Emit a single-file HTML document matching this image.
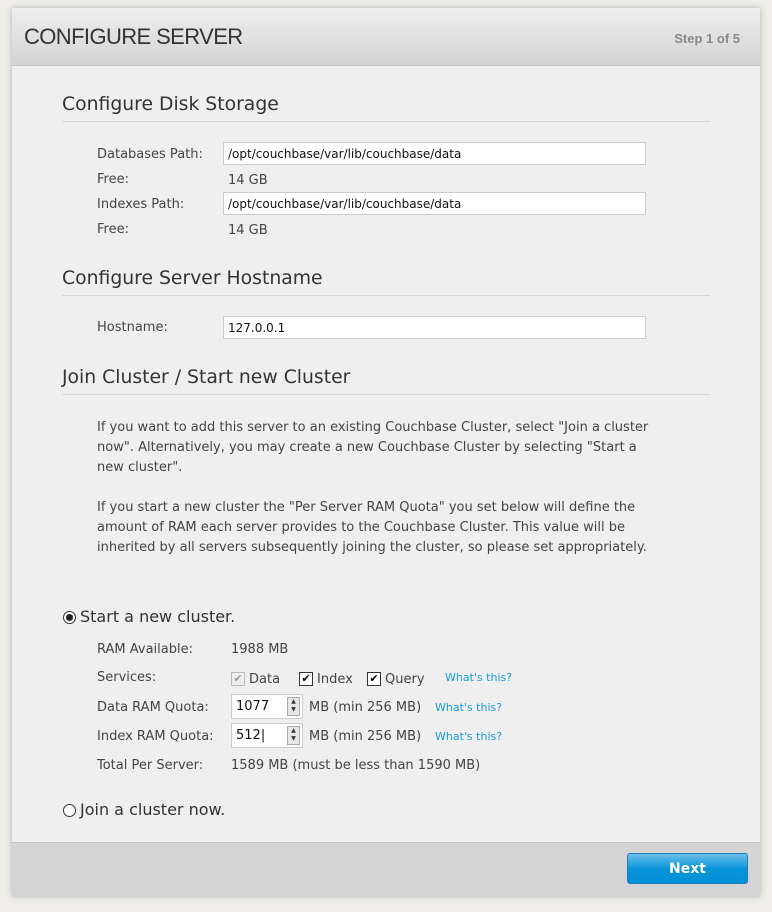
<!DOCTYPE html>
<html><head><style>
body{margin:0;width:772px;height:912px;background:#efeee8;font-family:"DejaVu Sans",Verdana,sans-serif;color:#333;position:relative;overflow:hidden}
.panel{position:absolute;left:12px;top:8px;width:748px;height:888px;background:#efefef;box-shadow:0 0 6px rgba(0,0,0,.25)}
.hdr{position:absolute;left:0;top:0;width:748px;height:57px;background:linear-gradient(#efefef,#d3d3d3);border-bottom:1px solid #c4c4c4}
.a{position:absolute;white-space:nowrap}
.t{font-size:13px;color:#444}
.h{font-size:18.8px;color:#333}
.line{position:absolute;left:50px;width:648px;height:1px;background:#d8d8d8}
.inp{position:absolute;left:211px;width:423px;height:23px;background:#fff;border:1px solid #ccc;font-size:12px;line-height:22px;padding-left:4px;box-sizing:border-box;color:#111}
.foot{position:absolute;left:0;top:834px;width:748px;height:54px;background:#d4d4d4;border-top:1px solid #c4c4c4}
.btn{position:absolute;left:615px;top:10px;width:121px;height:31px;border:1px solid #1e7bc0;border-radius:3px;background:linear-gradient(#6ec0ec,#0a93d8 50%,#0190d6);color:#fff;font-weight:bold;font-size:14px;text-align:center;line-height:30px;box-sizing:border-box}
.cb{position:absolute;width:12px;height:12px;border:1px solid #333;background:#fff;font-size:11px;line-height:12px;text-align:center;color:#000}
.num{position:absolute;left:219px;width:72px;height:25px;background:#fff;border:1px solid #ccc;box-sizing:border-box;font-size:13px;line-height:23px;padding-left:4px;color:#111}
.spin{position:absolute;right:2px;top:2px;width:13px;height:19px;background:#e6e6e6;border:1px solid #aaa;box-sizing:border-box;font-size:6px;line-height:8px;text-align:center;color:#333}
.lnk{font-size:11px;color:#1a9ad6}
.radio{position:absolute;width:11px;height:11px;border:1px solid #333;border-radius:50%;background:#fff}
</style></head><body>
<div class="panel">
<div class="hdr">
<div class="a" style="left:12px;top:16px;font-family:'Liberation Sans',sans-serif;font-size:22px;color:#333;letter-spacing:-0.6px">CONFIGURE SERVER</div>
<div class="a" style="right:20px;top:23px;font-family:'Liberation Sans',sans-serif;font-weight:bold;font-size:13px;color:#888">Step 1 of 5</div>
</div>
<div class="a h" style="left:50px;top:86px">Configure Disk Storage</div>
<div class="line" style="top:113px"></div>
<div class="a t" style="left:85px;top:139px">Databases Path:</div>
<div class="inp" style="top:134px">/opt/couchbase/var/lib/couchbase/data</div>
<div class="a t" style="left:85px;top:164px">Free:</div>
<div class="a t" style="left:216px;top:165px">14 GB</div>
<div class="a t" style="left:85px;top:189px">Indexes Path:</div>
<div class="inp" style="top:184px">/opt/couchbase/var/lib/couchbase/data</div>
<div class="a t" style="left:85px;top:214px">Free:</div>
<div class="a t" style="left:216px;top:215px">14 GB</div>
<div class="a h" style="left:50px;top:260px">Configure Server Hostname</div>
<div class="line" style="top:287px"></div>
<div class="a t" style="left:85px;top:312px">Hostname:</div>
<div class="inp" style="top:308px">127.0.0.1</div>
<div class="a h" style="left:50px;top:359px">Join Cluster / Start new Cluster</div>
<div class="line" style="top:386px"></div>
<div class="a t" style="left:85px;top:410px;line-height:20px">If you want to add this server to an existing Couchbase Cluster, select "Join a cluster<br>now". Alternatively, you may create a new Couchbase Cluster by selecting "Start a<br>new cluster".</div>
<div class="a t" style="left:85px;top:490px;line-height:20px">If you start a new cluster the "Per Server RAM Quota" you set below will define the<br>amount of RAM each server provides to the Couchbase Cluster. This value will be<br>inherited by all servers subsequently joining the cluster, so please set appropriately.</div>
<div class="radio" style="left:51px;top:603px"><div style="position:absolute;left:2px;top:2px;width:7px;height:7px;border-radius:50%;background:#222"></div></div>
<div class="a" style="left:68px;top:599px;font-size:16px;color:#333">Start a new cluster.</div>
<div class="a t" style="left:85px;top:634px">RAM Available:</div>
<div class="a t" style="left:219px;top:634px">1988 MB</div>
<div class="a t" style="left:85px;top:662px">Services:</div>
<div class="cb" style="left:219px;top:664px;border-color:#bbb;background:#eee;color:#999">✔</div>
<div class="a t" style="left:237px;top:664px">Data</div>
<div class="cb" style="left:287px;top:664px">✔</div>
<div class="a t" style="left:305px;top:664px">Index</div>
<div class="cb" style="left:355px;top:664px">✔</div>
<div class="a t" style="left:373px;top:664px">Query</div>
<div class="a lnk" style="left:433px;top:663px">What's this?</div>
<div class="a t" style="left:85px;top:692px">Data RAM Quota:</div>
<div class="num" style="top:686px">1077<div class="spin">▲<br>▼</div></div>
<div class="a t" style="left:297px;top:692px">MB (min 256 MB)</div>
<div class="a lnk" style="left:423px;top:693px">What's this?</div>
<div class="a t" style="left:85px;top:721px">Index RAM Quota:</div>
<div class="num" style="top:715px">512|<div class="spin">▲<br>▼</div></div>
<div class="a t" style="left:297px;top:721px">MB (min 256 MB)</div>
<div class="a lnk" style="left:423px;top:722px">What's this?</div>
<div class="a t" style="left:85px;top:750px">Total Per Server:</div>
<div class="a t" style="left:219px;top:750px">1589 MB (must be less than 1590 MB)</div>
<div class="radio" style="left:51px;top:796px"></div>
<div class="a" style="left:68px;top:792px;font-size:16px;color:#333">Join a cluster now.</div>
<div class="foot"><div class="btn">Next</div></div>
</div>
</body></html>
